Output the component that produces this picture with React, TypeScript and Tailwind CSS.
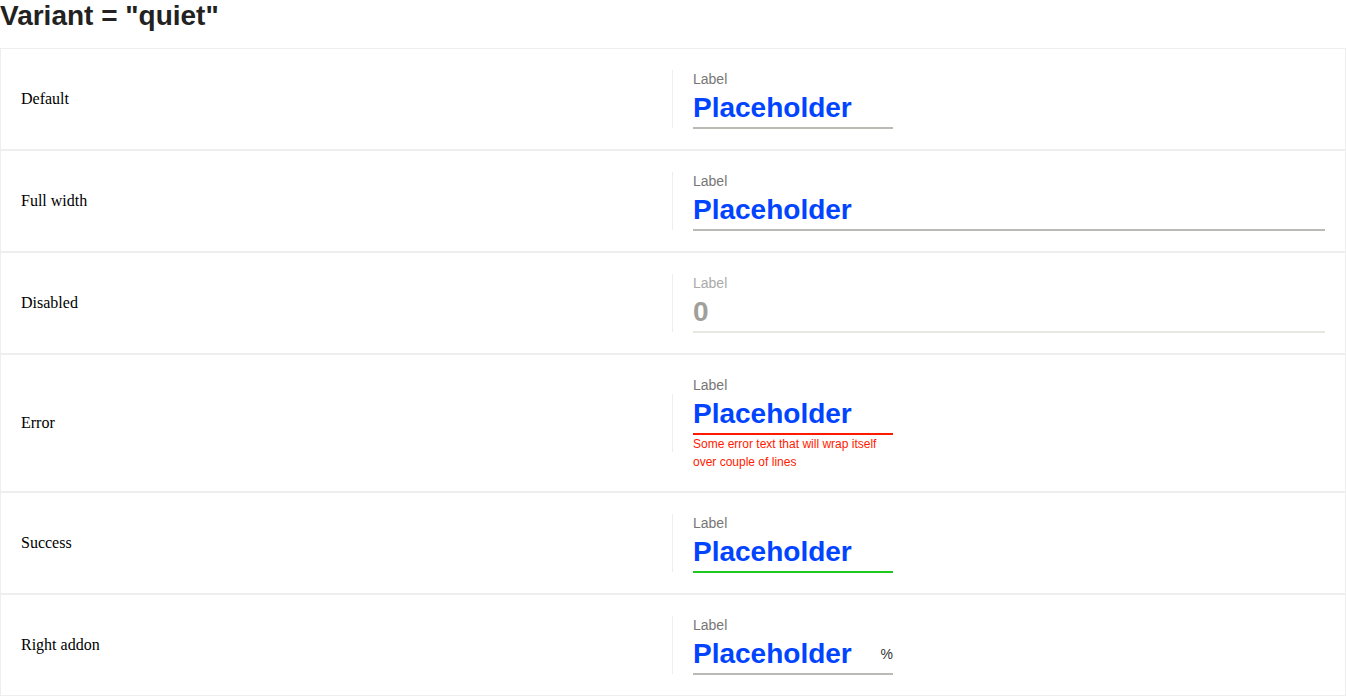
import React from 'react'

type FieldProps = {
    label: string
    value: string
    full?: boolean
    disabled?: boolean
    tone?: 'default' | 'error' | 'success'
    error?: string
    addon?: string
}

const underline = {
    default: 'border-[#bbbbb6]',
    error: 'border-[#ff1a00]',
    success: 'border-[#1ec81e]',
}

const Field = ({ label, value, full, disabled, tone = 'default', error, addon }: FieldProps) => {
    return (
        <div className={`flex flex-col ${full ? 'flex-1' : 'w-[200px]'}`}>
            <span className={`text-[14px] leading-[20px] ${disabled ? 'text-[#aaaaaa]' : 'text-[#767676]'}`}>{label}</span>
            <div className={`flex items-center h-[40px] border-b-2 ${disabled ? 'border-[#e8e8e2]' : underline[tone]}`}>
                <span className={`flex-1 text-[28px] leading-[38px] font-bold ${disabled ? 'text-[#a0a09b]' : 'text-[#0044ff]'}`}>{value}</span>
                {addon && <span className='text-[14px] text-[#333]'>{addon}</span>}
            </div>
            {error && <p className='text-[12px] leading-[18px] text-[#ff1a00]'>{error}</p>}
        </div>
    )
}

const rows: { name: string; field: FieldProps }[] = [
    { name: 'Default', field: { label: 'Label', value: 'Placeholder' } },
    { name: 'Full width', field: { label: 'Label', value: 'Placeholder', full: true } },
    { name: 'Disabled', field: { label: 'Label', value: '0', full: true, disabled: true } },
    { name: 'Error', field: { label: 'Label', value: 'Placeholder', tone: 'error', error: 'Some error text that will wrap itself over couple of lines' } },
    { name: 'Success', field: { label: 'Label', value: 'Placeholder', tone: 'success' } },
    { name: 'Right addon', field: { label: 'Label', value: 'Placeholder', addon: '%' } },
]

export default function App() {
    return (
        <div className='bg-white w-[1346px] font-["Liberation_Sans",Arial,sans-serif]'>
            <h1 className='text-[28px] leading-[32px] font-bold text-[#222] mb-4'>Variant = "quiet"</h1>
            <div className='flex flex-col'>
                {rows.map((row) => (
                    <div key={row.name} className='flex items-center border border-[#eeeeee] px-5 py-5'>
                        <div className='w-[651px] text-[16px] text-black font-["Liberation_Serif","Times_New_Roman",serif]'>{row.name}</div>
                        <div className='flex-1 flex items-center'>
                            <div className='w-px h-[58px] bg-[#eeeeee] mr-5' />
                            <Field {...row.field} />
                        </div>
                    </div>
                ))}
            </div>
        </div>
    )
}
